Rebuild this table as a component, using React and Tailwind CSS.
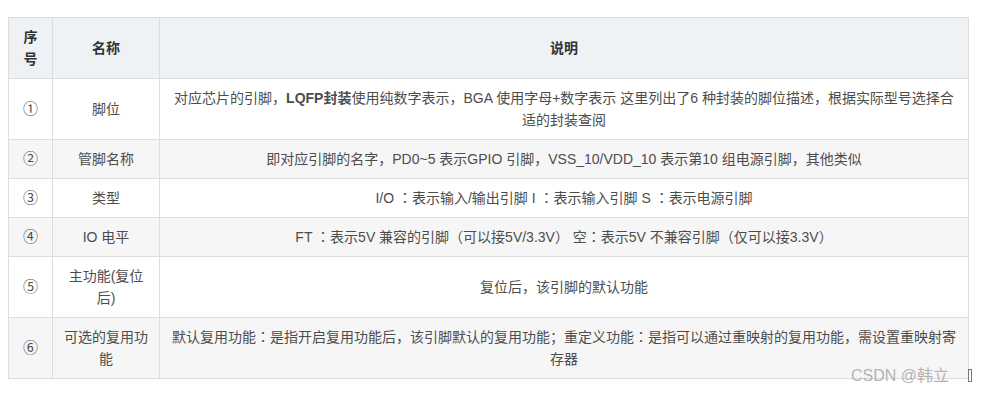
import React from 'react';

// 全角冒号用 JP 字形（居中），与参考图一致
const C = () => <span className="leading-none font-['Noto_Sans_CJK_JP',sans-serif]">：</span>;

const rows = [
  {
    no: '①',
    name: '脚位',
    desc: (
      <>
        对应芯片的引脚，<b className="font-bold">LQFP封装</b>使用纯数字表示，BGA 使用字母+数字表示 这里列出了6 种封装的脚位描述，根据实际型号选择合
        <br />
        适的封装查阅
      </>
    ),
  },
  { no: '②', name: '管脚名称', desc: '即对应引脚的名字，PD0~5 表示GPIO 引脚，VSS_10/VDD_10 表示第10 组电源引脚，其他类似' },
  { no: '③', name: '类型', desc: <>I/O <C />表示输入/输出引脚 I <C />表示输入引脚 S <C />表示电源引脚</> },
  { no: '④', name: 'IO 电平', desc: <>FT <C />表示5V 兼容的引脚（可以接5V/3.3V） 空<C />表示5V 不兼容引脚（仅可以接3.3V）</> },
  { no: '⑤', name: <>主功能(复位<br />后)</>, desc: '复位后，该引脚的默认功能' },
  {
    no: '⑥',
    name: <>可选的复用功<br />能</>,
    desc: (
      <>
        默认复用功能<C />是指开启复用功能后，该引脚默认的复用功能；重定义功能<C />是指可以通过重映射的复用功能，需设置重映射寄
        <br />
        存器
      </>
    ),
  },
];

const cell = 'border border-[#dddddd] px-2 py-2 text-center align-middle leading-[22px]';

export default function App() {
  return (
    <div className="relative w-[987px] h-[393px] bg-white text-[14px] leading-[22px] text-[#4d4d4d] font-['Liberation_Sans','Noto_Sans_CJK_SC',sans-serif]">
      <div className="pl-2 pt-[17px]">
        <table className="border-collapse w-[961px] table-fixed">
          <colgroup>
            <col className="w-[44px]" />
            <col className="w-[107px]" />
            <col />
          </colgroup>
          <thead>
            <tr className="bg-[#eff2f5] h-[61px]">
              <th className={`${cell} font-bold text-[#333333]`}>序<br />号</th>
              <th className={`${cell} font-bold text-[#333333]`}>名称</th>
              <th className={`${cell} font-bold text-[#333333]`}>说明</th>
            </tr>
          </thead>
          <tbody>
            {rows.map((r, i) => (
              <tr key={i} className={i % 2 === 1 ? 'bg-[#f6f6f6]' : 'bg-white'}>
                <td className={cell}>
                  <span className="text-[15px] leading-none font-['Noto_Sans_CJK_SC',sans-serif]">{r.no}</span>
                </td>
                <td className={cell}>{r.name}</td>
                <td className={`${cell} whitespace-nowrap`}>{r.desc}</td>
              </tr>
            ))}
          </tbody>
        </table>
      </div>

      {/* 水印 */}
      <div className="absolute left-[851px] top-[365px] text-[16px] leading-[22px] text-[#b3b3b3] whitespace-nowrap">
        CSDN @韩立
      </div>
      <div className="absolute left-[968px] top-[369px] w-[4px] h-[13px] border border-[#777777]" />
    </div>
  );
}
